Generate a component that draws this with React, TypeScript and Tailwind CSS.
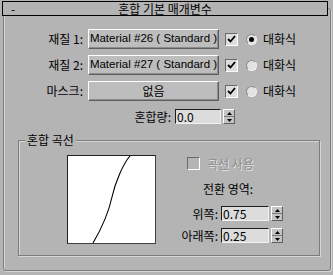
import { FC } from 'react';

const font = { fontFamily: '"Noto Sans CJK KR", "Noto Sans", sans-serif' };

const Check: FC<{ on?: boolean; disabled?: boolean }> = ({ on, disabled }) => (
  <div
    className={`w-[13px] h-[13px] flex items-center justify-center border border-t-[#6a6a6a] border-l-[#6a6a6a] border-b-white border-r-white ${
      disabled ? 'bg-[#b4b4b4]' : 'bg-[#dedede]'
    }`}
  >
    {on && (
      <svg width="9" height="9" viewBox="0 0 9 9">
        <path d="M1 4 L3.5 6.5 L8 1" stroke="#000" strokeWidth="1.8" fill="none" />
      </svg>
    )}
  </div>
);

const Radio: FC<{ on?: boolean }> = ({ on }) => (
  <div className="w-[11px] h-[11px] rounded-full bg-[#e2e2e2] border border-t-[#8a8a8a] border-l-[#8a8a8a] border-b-[#f2f2f2] border-r-[#f2f2f2] flex items-center justify-center">
    {on && <div className="w-[5px] h-[5px] rounded-full bg-black" />}
  </div>
);

const Spinner: FC = () => (
  <div className="w-[12px] h-[15px] flex flex-col bg-[#c4c4c4] border border-t-white border-l-white border-b-[#5f5f5f] border-r-[#5f5f5f]">
    <div className="flex-1 flex items-center justify-center border-b border-[#7a7a7a]">
      <svg width="5" height="3" viewBox="0 0 5 3">
        <path d="M0 3 L2.5 0 L5 3 Z" fill="#000" />
      </svg>
    </div>
    <div className="flex-1 flex items-center justify-center">
      <svg width="5" height="3" viewBox="0 0 5 3">
        <path d="M0 0 L2.5 3 L5 0 Z" fill="#000" />
      </svg>
    </div>
  </div>
);

const Field: FC<{ value: string; w: string }> = ({ value, w }) => (
  <div className="flex items-center gap-[2px]">
    <div
      className={`${w} h-[15px] bg-[#dcdcdc] border border-t-[#1e1e1e] border-l-[#1e1e1e] border-b-[#f0f0f0] border-r-[#f0f0f0] flex items-center pl-[1px] text-[12px] leading-none`}
    >
      {value}
    </div>
    <Spinner />
  </div>
);

const MatRow: FC<{ label: string; button: string; latin?: boolean; radioOn?: boolean }> = ({
  label,
  button,
  latin,
  radioOn,
}) => (
  <div className="flex items-center h-[20px]">
    <div className="w-[80px] text-right text-[12px] pr-[1px]">{label}</div>
    <div className="ml-[4px]">
      <div className="w-[131px] h-[20px] flex items-center justify-center bg-[#bdbdbd] border border-t-white border-l-white border-b-[#5f5f5f] border-r-[#5f5f5f] shadow-[inset_-1px_-1px_0_#8c8c8c] text-black whitespace-nowrap">
        {latin ? (
          <span className="text-[11.5px]" style={{ fontFamily: '"Liberation Sans", Arial, sans-serif' }}>
            {button}
          </span>
        ) : (
          <span className="text-[12px]">{button}</span>
        )}
      </div>
    </div>
    <div className="ml-[6px]">
      <Check on />
    </div>
    <div className="ml-[8px]">
      <Radio on={radioOn} />
    </div>
    <div className="ml-[6px] text-[12px]">대화식</div>
  </div>
);

export default function App() {
  return (
    <div className="w-[333px] h-[275px] bg-[#b4b4b4] text-black pt-[1px] overflow-hidden" style={font}>
      <div className="relative z-10 mx-[2px] w-[326px] h-[15px] border border-black bg-[#b4b4b4] flex items-center text-[12px] leading-none">
        <span className="absolute left-[8px] top-[1px]">-</span>
        <span className="w-full text-center">혼합 기본 매개변수</span>
      </div>
      <div className="-mt-[8px] ml-[3px] w-[328px] h-[263px] border border-[#7c7c7c] rounded-[3px] shadow-[inset_1px_1px_0_#d6d6d6,1px_1px_0_#d6d6d6] pt-[20px]">
        <div className="flex flex-col gap-[6px]">
          <MatRow label="재질 1:" button="Material #26  ( Standard )" latin radioOn />
          <MatRow label="재질 2:" button="Material #27  ( Standard )" latin />
          <MatRow label="마스크:" button="없음" />
        </div>
        <div className="flex items-center mt-[8px] h-[15px]">
          <div className="w-[168px] text-right text-[12px] pr-[1px]">혼합량:</div>
          <div className="ml-[3px]">
            <Field value="0.0" w="w-[46px]" />
          </div>
        </div>
        <div className="relative ml-[14px] mt-[16px] w-[302px] h-[116px] border border-[#7c7c7c] shadow-[inset_1px_1px_0_#d6d6d6,1px_1px_0_#d6d6d6]">
          <span className="absolute left-[6px] -top-[8px] px-[2px] bg-[#b4b4b4] text-[12px] leading-[14px]">혼합 곡선</span>
          <div className="flex pt-[14px]">
            <div className="ml-[48px] w-[89px] h-[89px] bg-white border border-t-[#202020] border-l-[#202020] border-b-[#404040] border-r-[#404040]">
              <svg width="87" height="87" viewBox="0 0 87 87">
                <path d="M25 87 C 35 70, 41 55, 44 41 S 55 8, 62 0" stroke="#000" strokeWidth="1.1" fill="none" />
              </svg>
            </div>
            <div className="ml-[31px] flex flex-col">
              <div className="flex items-center mt-[2px] h-[13px]">
                <Check disabled />
                <span className="ml-[7px] text-[12px] text-[#8c8c8c] [text-shadow:1px_1px_0_#e4e4e4]">곡선 사용</span>
              </div>
              <div className="mt-[12px] pl-[16px] text-[12px] leading-[14px]">전환 영역:</div>
              <div className="flex items-center mt-[10px] h-[15px]">
                <div className="w-[32px] flex justify-end text-[12px] pr-[1px] whitespace-nowrap">위쪽:</div>
                <div className="ml-[2px]">
                  <Field value="0.75" w="w-[48px]" />
                </div>
              </div>
              <div className="flex items-center mt-[7px] h-[15px]">
                <div className="w-[32px] flex justify-end text-[12px] pr-[1px] whitespace-nowrap">아래쪽:</div>
                <div className="ml-[2px]">
                  <Field value="0.25" w="w-[48px]" />
                </div>
              </div>
            </div>
          </div>
        </div>
      </div>
    </div>
  );
}
